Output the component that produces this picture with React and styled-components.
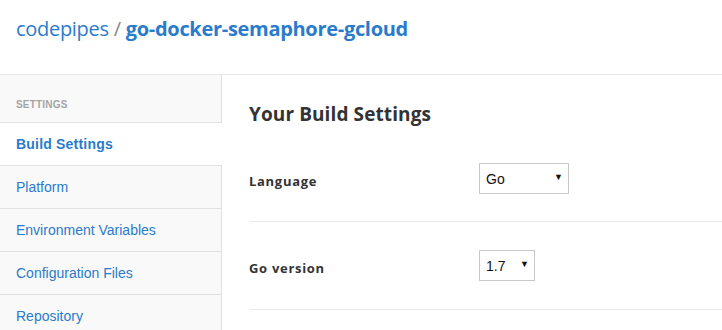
import React from "react";
import styled, { createGlobalStyle } from "styled-components";

const Global = createGlobalStyle`
  html, body {
    margin: 0;
    padding: 0;
    background: #fff;
  }
  body {
    font-family: "Liberation Sans", Arial, sans-serif;
    overflow: hidden;
  }
`;

const Page = styled.div`
  width: 722px;
  height: 330px;
  display: flex;
  flex-direction: column;
  overflow: hidden;
`;

const Header = styled.header`
  flex-shrink: 0;
  height: 75px;
  border-bottom: 1px solid #e6e6e6;
  padding: 15px 0 0 16px;
  box-sizing: border-box;
  font-family: "Open Sans", sans-serif;
  font-size: 20px;
  color: #2a7bcb;
  letter-spacing: -0.3px;
`;

const Owner = styled.span`
  font-weight: 400;
`;

const Slash = styled.span`
  color: #888;
  margin: 0 5px;
`;

const Repo = styled.span`
  font-weight: 700;
`;

const Body = styled.div`
  flex: 1;
  display: flex;
`;

const Sidebar = styled.nav`
  flex-shrink: 0;
  width: 221px;
  background: #f9f9f9;
  border-right: 1px solid #e1e1e1;
  display: flex;
  flex-direction: column;
`;

const SideLabel = styled.div`
  height: 48px;
  box-sizing: border-box;
  padding: 24px 0 0 16px;
  font-size: 10px;
  font-weight: 700;
  color: #a5a5a5;
  letter-spacing: 0.2px;
  border-bottom: 1px solid #e1e1e1;
`;

const SideItem = styled.a`
  flex-shrink: 0;
  height: 43px;
  box-sizing: border-box;
  display: flex;
  align-items: center;
  padding-left: 16px;
  font-size: 14px;
  text-decoration: none;
  color: #2a7bcb;
  border-bottom: 1px solid #e1e1e1;
  background: ${(p) => (p.$active ? "#fff" : "transparent")};
  font-weight: ${(p) => (p.$active ? 700 : 400)};
  letter-spacing: ${(p) => (p.$active ? "0.2px" : "0")};
  margin-right: ${(p) => (p.$active ? "-1px" : "0")};
`;

const Main = styled.main`
  flex: 1;
  padding: 26px 0 0 27px;
`;

const Title = styled.h2`
  margin: 0;
  height: 26px;
  font-family: "Open Sans", sans-serif;
  font-size: 19px;
  line-height: 26px;
  font-weight: 700;
  color: #333;
  letter-spacing: 0.1px;
`;

const Row = styled.div`
  display: flex;
  align-items: center;
  box-sizing: border-box;
  height: ${(p) => p.$h}px;
  padding-top: ${(p) => p.$top}px;
  border-bottom: 1px solid #e9e9e9;
`;

const Label = styled.label`
  width: 230px;
  padding-top: 4px;
  font-family: "Open Sans", sans-serif;
  font-size: 13px;
  font-weight: 700;
  color: #333;
  letter-spacing: 0.7px;
`;

const SelectWrap = styled.div`
  position: relative;
  width: ${(p) => p.$w}px;
  height: 31px;
`;

const Select = styled.select`
  appearance: none;
  width: 100%;
  height: 100%;
  box-sizing: border-box;
  border: 1px solid #c8c8c8;
  border-radius: 0;
  background: #fff;
  padding: 0 0 0 6px;
  font-family: "Liberation Sans", Arial, sans-serif;
  font-size: 14px;
  color: #111;
  outline: none;
`;

const Arrow = styled.span`
  position: absolute;
  right: 6px;
  top: 9px;
  font-size: 9px;
  color: #111;
  pointer-events: none;
`;

const SettingSelect = ({ width, value, options }) => (
  <SelectWrap $w={width}>
    <Select defaultValue={value}>
      {options.map((o) => (
        <option key={o}>{o}</option>
      ))}
    </Select>
    <Arrow>▼</Arrow>
  </SelectWrap>
);

const items = [
  "Build Settings",
  "Platform",
  "Environment Variables",
  "Configuration Files",
  "Repository",
];

export default function App() {
  return (
    <Page>
      <Global />
      <Header>
        <Owner>codepipes</Owner>
        <Slash>/</Slash>
        <Repo>go-docker-semaphore-gcloud</Repo>
      </Header>
      <Body>
        <Sidebar>
          <SideLabel>SETTINGS</SideLabel>
          {items.map((t, i) => (
            <SideItem key={t} href="#" $active={i === 0}>
              {t}
            </SideItem>
          ))}
        </Sidebar>
        <Main>
          <Title>Your Build Settings</Title>
          <Row $h={95} $top={9}>
            <Label>Language</Label>
            <SettingSelect width={90} value="Go" options={["Go", "Ruby", "Python"]} />
          </Row>
          <Row $h={88} $top={0}>
            <Label>Go version</Label>
            <SettingSelect width={56} value="1.7" options={["1.7", "1.6", "1.5"]} />
          </Row>
        </Main>
      </Body>
    </Page>
  );
}
